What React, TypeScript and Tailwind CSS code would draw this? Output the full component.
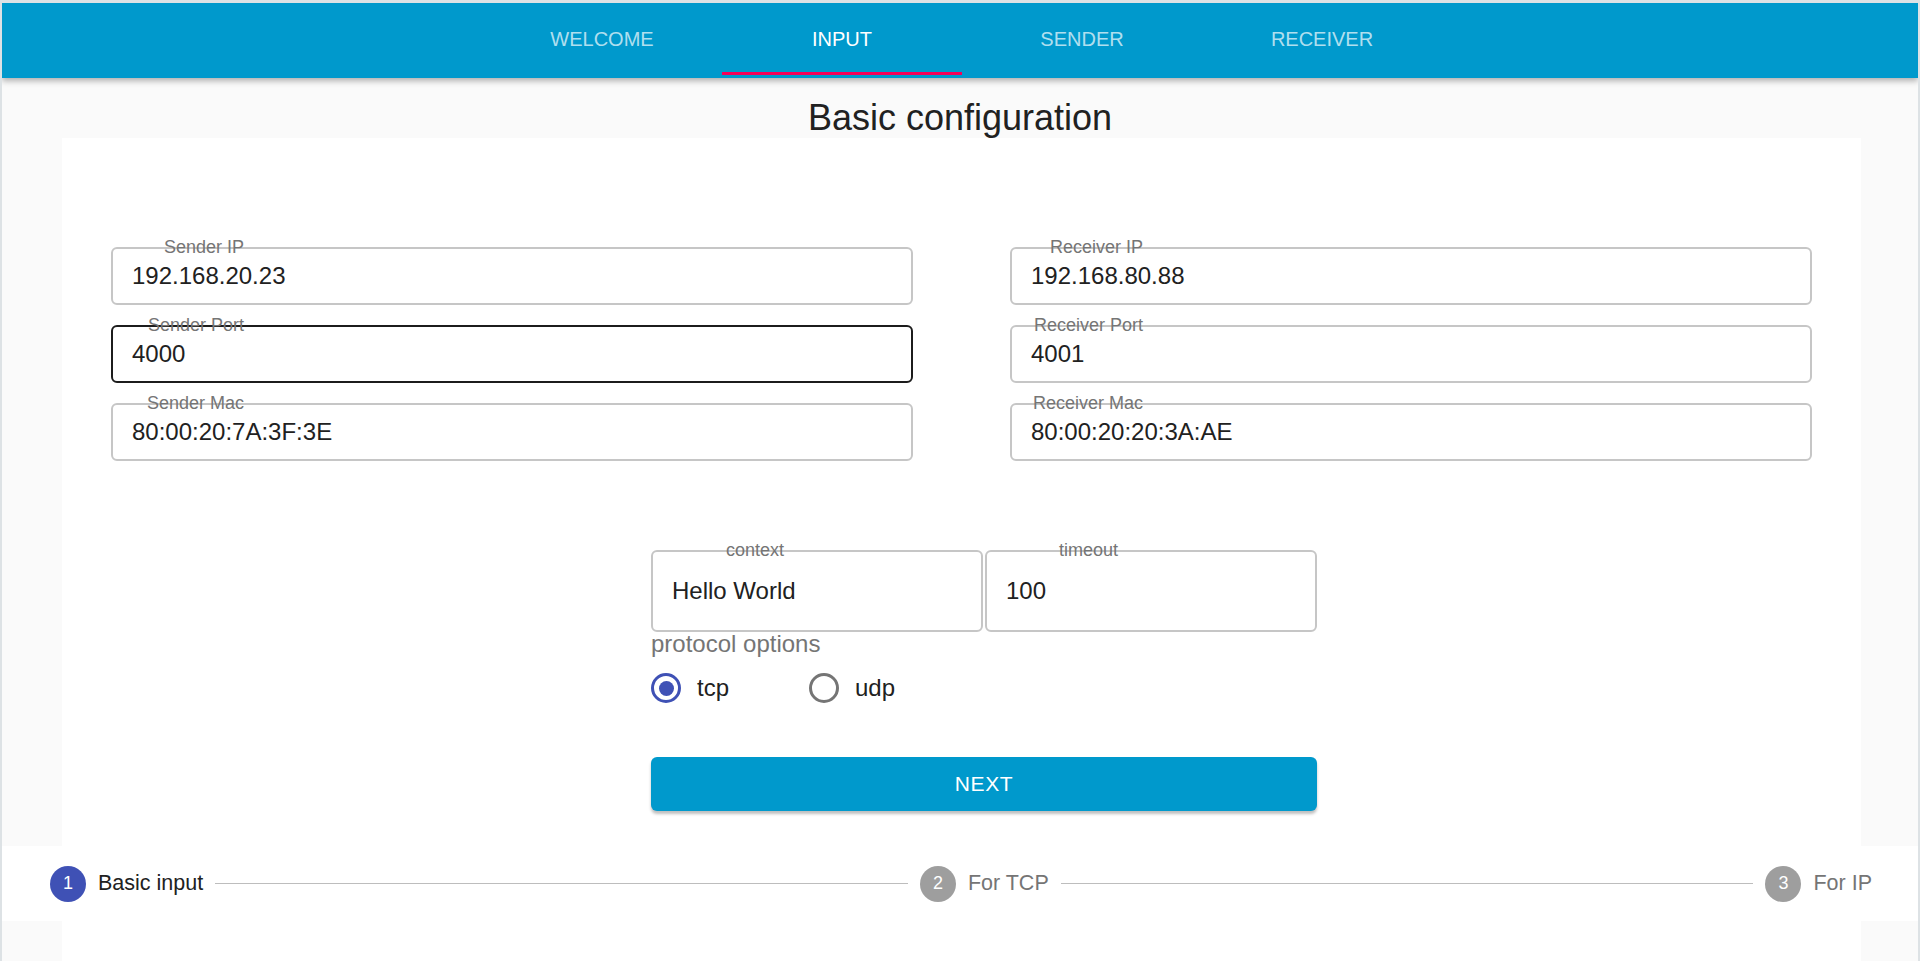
import React from "react"

const tabs = ["Welcome", "Input", "Sender", "Receiver"]

function Field({ label, value, focused = false, tall = false, className = "" }: { label: string; value: string; focused?: boolean; tall?: boolean; className?: string }) {
  return (
    <div
      className={`relative rounded-[6px] border-2 ${focused ? "border-[#1c1c1c]" : "border-[#c6c6c6]"} ${tall ? "h-[82px]" : "h-[58px]"} ${className}`}
    >
      <div className="absolute left-0 top-[-11px] w-[131px] text-right text-[18px] leading-none text-[#757575] whitespace-nowrap">
        {label}
      </div>
      <input
        readOnly
        defaultValue={value}
        className="w-full h-full bg-transparent outline-none px-[19px] text-[24px] text-[#212121]"
      />
    </div>
  )
}

function Radio({ checked, label }: { checked: boolean; label: string }) {
  return (
    <div className="flex items-center gap-[16px]">
      <div
        className={`w-[30px] h-[30px] rounded-full border-[3px] flex items-center justify-center ${checked ? "border-[#3f51b5]" : "border-[#757575]"}`}
      >
        {checked && <div className="w-[15px] h-[15px] rounded-full bg-[#3f51b5]" />}
      </div>
      <span className="text-[24px] leading-none text-[#212121]">{label}</span>
    </div>
  )
}

function Step({ n, label, active = false }: { n: number; label: string; active?: boolean }) {
  return (
    <div className="flex items-center gap-[12px]">
      <div
        className={`w-[36px] h-[36px] rounded-full flex items-center justify-center text-white text-[18px] ${active ? "bg-[#3f51b5]" : "bg-[#9e9e9e]"}`}
      >
        {n}
      </div>
      <span className={`text-[21.5px] ${active ? "text-[#212121]" : "text-[#757575]"}`}>{label}</span>
    </div>
  )
}

export default function App() {
  return (
    <div className="min-h-screen bg-[#fafafa] border-t-[3px] border-x-2 border-[#dde2e5] font-['Liberation_Sans',Arial,sans-serif] overflow-hidden">
      {/* App bar with tabs */}
      <header className="relative z-10 bg-[#0099cc] pb-[3px] shadow-[0_3px_6px_rgba(0,0,0,0.3)]">
        <nav className="flex justify-center pl-[4px]">
          {tabs.map((t) => {
            const active = t === "Input"
            return (
              <div
                key={t}
                className={`relative w-[240px] h-[72px] flex items-center justify-center uppercase text-[20px] ${active ? "text-white" : "text-white/70"}`}
              >
                {t}
                {active && <div className="absolute left-0 right-0 bottom-0 h-[3px] bg-[#f50057]" />}
              </div>
            )
          })}
        </nav>
      </header>

      <h1 className="pt-[19px] text-center text-[36px] leading-[41px] text-[#212121]">Basic configuration</h1>

      {/* Form card */}
      <section className="ml-[60px] mr-[57px] bg-white pl-[49px] pr-[49px] pt-[109px] pb-[35px]">
        <div className="grid grid-cols-2 gap-x-[97px]">
          <div className="flex flex-col gap-[20px]">
            <Field label="Sender IP" value="192.168.20.23" />
            <Field label="Sender Port" value="4000" focused />
            <Field label="Sender Mac" value="80:00:20:7A:3F:3E" />
          </div>
          <div className="flex flex-col gap-[20px]">
            <Field label="Receiver IP" value="192.168.80.88" />
            <Field label="Receiver Port" value="4001" />
            <Field label="Receiver Mac" value="80:00:20:20:3A:AE" />
          </div>
        </div>

        <div className="ml-[540px] w-[666px] mt-[89px]">
          <div className="flex gap-[2px]">
            <Field label="context" value="Hello World" tall className="w-[332px]" />
            <Field label="timeout" value="100" tall className="w-[332px]" />
          </div>
          <div className="text-[24px] leading-none text-[#757575]">protocol options</div>
          <div className="flex gap-[80px] mt-[17px]">
            <Radio checked label="tcp" />
            <Radio checked={false} label="udp" />
          </div>
          <button className="mt-[54px] w-full h-[54px] rounded-[6px] bg-[#0099cc] text-white uppercase text-[21px] tracking-[0.6px] shadow-[0_3px_3px_rgba(0,0,0,0.25)]">
            Next
          </button>
        </div>
      </section>

      {/* Stepper */}
      <div className="bg-white h-[75px] flex items-center pl-[48px] pr-[46px]">
        <Step n={1} label="Basic input" active />
        <div className="flex-1 mx-[12px] border-t border-[#bdbdbd]" />
        <Step n={2} label="For TCP" />
        <div className="flex-1 mx-[12px] border-t border-[#bdbdbd]" />
        <Step n={3} label="For IP" />
      </div>

      <div className="ml-[60px] mr-[57px] bg-white h-[60px]" />
    </div>
  )
}
